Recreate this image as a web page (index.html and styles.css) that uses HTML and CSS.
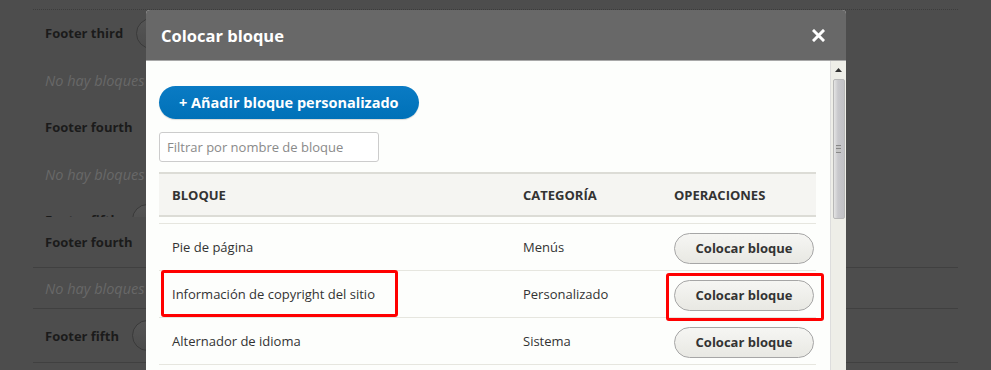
FILE: index.html
```html
<!DOCTYPE html>
<html>
<head>
    <title>Colocar bloque</title>
    <link rel="stylesheet" href="styles.css">
</head>
<body>
    <div class="layout">
        <div class="dotted"></div>
        <div class="region"><span class="region-name">Footer third</span><span class="ghost-btn"></span></div>
        <div class="region-empty">No hay bloques en esta región</div>
        <div class="region"><span class="region-name">Footer fourth</span><span class="ghost-btn"></span></div>
        <div class="region-empty">No hay bloques en esta región</div>
        <div class="region region-cut"><span class="region-name">Footer fifth</span><span class="ghost-btn"></span></div>
        <div class="region region-line r-a"><span class="region-name">Footer fourth</span><span class="ghost-btn"></span></div>
        <div class="region-empty region-line r-b">No hay bloques en esta región</div>
        <div class="region region-line r-c"><span class="region-name">Footer fifth</span><span class="ghost-btn"></span></div>
    </div>

    <div class="dialog">
        <div class="dialog-head">
            <span class="dialog-title">Colocar bloque</span>
            <span class="dialog-close">
                <svg width="13" height="13" viewBox="0 0 13 13"><path d="M2 2 L11 11 M11 2 L2 11" stroke="#fff" stroke-width="3" stroke-linecap="square"/></svg>
            </span>
        </div>
        <div class="dialog-body">
            <div class="dialog-content">
                <a class="btn-primary">+ Añadir bloque personalizado</a>
                <input type="text" class="filter" placeholder="Filtrar por nombre de bloque">
                <table class="blocks">
                    <thead>
                        <tr><th class="col-name">Bloque</th><th class="col-cat">Categoría</th><th>Operaciones</th></tr>
                    </thead>
                    <tbody>
                        <tr><td>Pie de página</td><td>Menús</td><td class="ops"><a class="btn">Colocar bloque</a></td></tr>
                        <tr><td>Información de copyright del sitio</td><td>Personalizado</td><td class="ops"><a class="btn">Colocar bloque</a></td></tr>
                        <tr><td>Alternador de idioma</td><td>Sistema</td><td class="ops"><a class="btn">Colocar bloque</a></td></tr>
                    </tbody>
                </table>
            </div>
            <div class="scrollbar">
                <div class="scroll-up"><svg width="7" height="4" viewBox="0 0 7 4"><path d="M0 4 L3.5 0 L7 4 Z" fill="#333"/></svg></div>
                <div class="scroll-thumb"><span class="grip"></span></div>
            </div>
        </div>
    </div>

    <div class="mark mark-name"></div>
    <div class="mark mark-btn"></div>
</body>
</html>
```

FILE: styles.css
```css
body {
    margin: 0;
    background-color: #4d4d4d; /* overlay oscuro */
    font-family: "Open Sans", "DejaVu Sans", sans-serif;
    font-size: 13px;
    color: #333;
    height: 370px;
    overflow: hidden;
}
.layout {
    margin-left: 33px;
    width: 925px;
}
.dotted {
    height: 9px;
    border-bottom: 1px dotted #3c3c3c;
}
.region,
.region-empty {
    display: flex;
    align-items: center;
    padding-left: 12px;
    box-sizing: border-box;
}
.region {
    height: 46px;
}
.region-empty {
    height: 48px;
    font-style: italic;
    font-size: 14.5px;
    color: #686868;
    white-space: nowrap;
}
.region-name {
    font-weight: bold;
    color: #1b1b1b;
}
.ghost-btn {
    width: 140px;
    height: 29px;
    margin-left: 13px;
    border: 1px solid #3a3a3a;
    border-radius: 16px;
    background: linear-gradient(#555, #4b4b4b);
}
.region-cut {
    height: 19px;
    overflow: hidden;
    align-items: flex-start;
    padding-top: 13px;
}
.region-cut .ghost-btn {
    margin-top: -7px;
}
.region-line {
    border-bottom: 1px solid #404040;
}
.r-a { height: 51px; }
.r-b { height: 41px; }
.r-c { height: 54px; }

/* dialogo */
.dialog {
    position: absolute;
    left: 146px;
    top: 10px;
    width: 700px;
    height: 370px;
    background: #fdfefc;
    border-radius: 4px 4px 0 0;
    overflow: hidden;
    display: flex;
    flex-direction: column;
}
.dialog-head {
    height: 51px;
    flex: none;
    background: #686868;
    border-bottom: 1px solid #a8a8a8;
    box-sizing: border-box;
    display: flex;
    align-items: center;
    justify-content: space-between;
    padding: 0 21px 0 15px;
}
.dialog-title {
    color: #fff;
    font-weight: bold;
    font-size: 16.5px;
}
.dialog-close {
    display: flex;
}
.dialog-body {
    flex: 1;
    display: flex;
}
.dialog-content {
    flex: 1;
    padding: 25px 14px 0 13px;
}
.btn-primary {
    display: inline-block;
    height: 33px;
    line-height: 33px;
    padding: 0 20px;
    border-radius: 17px;
    background: linear-gradient(#0a7bc4, #0071b8);
    color: #fff;
    font-weight: bold;
    font-size: 14.5px;
    box-shadow: 0 1px 1px rgba(0, 0, 0, 0.15);
}
.filter {
    display: block;
    margin-top: 13px;
    width: 220px;
    height: 30px;
    box-sizing: border-box;
    padding: 0 7px;
    border: 1px solid #ccc;
    border-radius: 3px;
    font-family: inherit;
    font-size: 13px;
    color: #333;
}
.filter::placeholder {
    color: #8a8a8a;
}
.blocks {
    margin-top: 10px;
    width: 100%;
    border-collapse: collapse;
    table-layout: fixed;
}
.blocks th {
    height: 43px;
    box-sizing: border-box;
    background: #f5f5f2;
    border-top: 2px solid #dcdcd6;
    border-bottom: 2px solid #dcdcd6;
    text-align: left;
    padding: 0 13px;
    font-size: 13px;
    text-transform: uppercase;
    color: #333;
}
.blocks .col-name { width: 351px; }
.blocks .col-cat { width: 151px; }
.blocks tbody:before {
    content: "";
    display: table-row;
    height: 7px;
}
.blocks td {
    height: 46px;
    padding: 0 13px;
    border-top: 1px solid #e6e6df;
    border-bottom: 1px solid #e6e6df;
}
.blocks td.ops {
    height: 42px;
    padding-top: 4px;
}
.btn {
    display: inline-block;
    width: 138px;
    height: 29px;
    line-height: 29px;
    text-align: center;
    border: 1px solid #a6a6a6;
    border-radius: 16px;
    background: linear-gradient(#f6f6f3, #e8e8e3);
    font-weight: bold;
    font-size: 13px;
    color: #333;
}

/* barra de scroll dibujada */
.scrollbar {
    width: 16px;
    background: #eeeee8;
    border-left: 1px solid #dddddd;
    box-sizing: border-box;
    display: flex;
    flex-direction: column;
    align-items: center;
}
.scroll-up {
    height: 18px;
    display: flex;
    align-items: center;
}
.scroll-thumb {
    width: 12px;
    height: 140px;
    box-sizing: border-box;
    border: 1px solid #b8b8b8;
    border-radius: 2px;
    background: linear-gradient(90deg, #e4e4e4, #c8c8cc 40%, #c2c2c6);
    display: flex;
    align-items: center;
    justify-content: center;
}
.grip {
    width: 5px;
    height: 6px;
    border-top: 1px solid #888;
    border-bottom: 1px solid #888;
    background: linear-gradient(#c4c4c4 2px, #888 2px, #888 3px, #c4c4c4 3px);
}

/* marcas rojas */
.mark {
    position: absolute;
    border: 3px solid #f00;
    border-radius: 3px;
    box-sizing: border-box;
}
.mark-name {
    left: 161px;
    top: 270px;
    width: 237px;
    height: 47px;
}
.mark-btn {
    left: 666px;
    top: 273px;
    width: 158px;
    height: 48px;
}
```
